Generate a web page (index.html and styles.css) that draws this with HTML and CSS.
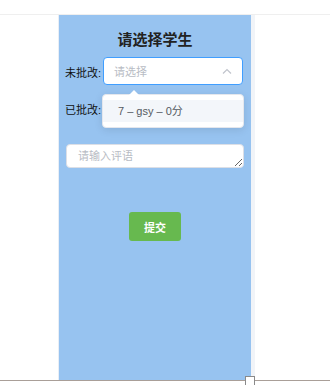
FILE: index.html
```html
<!DOCTYPE html>
<html lang="zh">
<head>
<meta charset="utf-8">
<link rel="stylesheet" href="styles.css">
</head>
<body>
<div class="page">
  <div class="top"></div>
  <div class="main">
    <div class="gutter"></div>
    <div class="panel">
      <h2 class="title">请选择学生</h2>
      <div class="row">
        <span class="label">未批改:</span>
        <div class="select focused">
          <span class="placeholder">请选择</span>
          <svg class="caret" width="10" height="6" viewBox="0 0 10 6"><path d="M1 5.5 L5 1.5 L9 5.5" fill="none" stroke="#c0c4cc" stroke-width="1.2"/></svg>
        </div>
      </div>
      <div class="row row2">
        <span class="label">已批改:</span>
        <div class="select"></div>
      </div>
      <textarea class="comment" placeholder="请输入评语"></textarea>
      <div class="actions">
        <button class="submit">提交</button>
      </div>
      <div class="dropdown">
        <span class="arrow"></span>
        <div class="item">7 – gsy – 0分</div>
      </div>
    </div>
    <div class="strip"></div>
  </div>
  <div class="bottom"><span class="handle"></span></div>
</div>
</body>
</html>
```
FILE: styles.css
```css
html, body {
  margin: 0;
  padding: 0;
  background: #ffffff;
  font-family: "Liberation Sans", "Noto Sans CJK SC", sans-serif;
}
.page {
  position: relative;
  width: 330px;
  height: 385px;
  overflow: hidden;
}
.top {
  height: 14px;
  border-bottom: 1px solid #efefef;
  background: #ffffff;
}
.main {
  display: flex;
  height: 365px;
}
.gutter {
  width: 58px;
  border-right: 1px solid #e8eef6;
}
.panel {
  position: relative;
  width: 192px;
  background: #97c3f0;
  padding: 15px 8px 0 6px;
  box-sizing: border-box;
}
.strip {
  width: 4px;
  background: #f1f4f8;
}
.title {
  margin: 0;
  height: 20px;
  line-height: 20px;
  font-size: 15px;
  font-weight: 600;
  text-align: center;
  color: #222;
  padding-left: 2px;
}
.row {
  display: flex;
  align-items: center;
  margin-top: 7px;
  height: 28px;
}
.row2 {
  margin-top: 9px;
}
.label {
  width: 38px;
  font-size: 11px;
  color: #111;
  white-space: nowrap;
  position: relative;
  top: 1px;
}
.select {
  box-sizing: border-box;
  width: 140px;
  height: 28px;
  border: 1px solid #dcdfe6;
  border-radius: 4px;
  background: #fff;
  display: flex;
  align-items: center;
  justify-content: space-between;
  padding: 0 10px;
}
.select.focused {
  border-color: #409eff;
}
.placeholder {
  font-size: 11px;
  color: #b8bcc4;
}
.caret {
  display: block;
}
.comment {
  display: block;
  box-sizing: border-box;
  margin: 22px 0 0 1px;
  width: 178px;
  height: 24px;
  border: 1px solid #dcdfe6;
  border-radius: 4px;
  padding: 4px 11px;
  font-family: "Liberation Sans", "Noto Sans CJK SC", sans-serif;
  font-size: 11px;
  line-height: 14px;
  background: #fff;
  outline: none;
}
.comment::placeholder {
  color: #b8bcc4;
}
.actions {
  display: flex;
  justify-content: center;
  margin-top: 44px;
  padding-left: 2px;
}
.submit {
  width: 52px;
  height: 29px;
  border: none;
  border-radius: 3px;
  background: #67b94f;
  color: #fff;
  font-family: "Liberation Sans", "Noto Sans CJK SC", sans-serif;
  font-size: 11px;
  font-weight: 700;
  padding: 0;
}
.dropdown {
  position: absolute;
  left: 43px;
  top: 79px;
  width: 142px;
  height: 34px;
  box-sizing: border-box;
  background: #fff;
  border: 1px solid #e4e7ed;
  border-radius: 4px;
  box-shadow: 0 2px 8px rgba(0, 0, 0, 0.1);
  padding: 5px 0;
}
.arrow {
  position: absolute;
  left: 26px;
  top: -5px;
  width: 0;
  height: 0;
  border-left: 5px solid transparent;
  border-right: 5px solid transparent;
  border-bottom: 5px solid #fff;
}
.item {
  height: 22px;
  line-height: 22px;
  background: #f3f6fa;
  font-size: 11px;
  color: #555a62;
  padding-left: 15px;
}
.bottom {
  position: absolute;
  left: 0;
  top: 380px;
  width: 330px;
  height: 0;
  border-top: 1px solid #a99f98;
}
.handle {
  position: absolute;
  left: 245px;
  top: -5px;
  width: 8px;
  height: 8px;
  background: #fff;
  border: 1px solid #8a8a8a;
}
```
